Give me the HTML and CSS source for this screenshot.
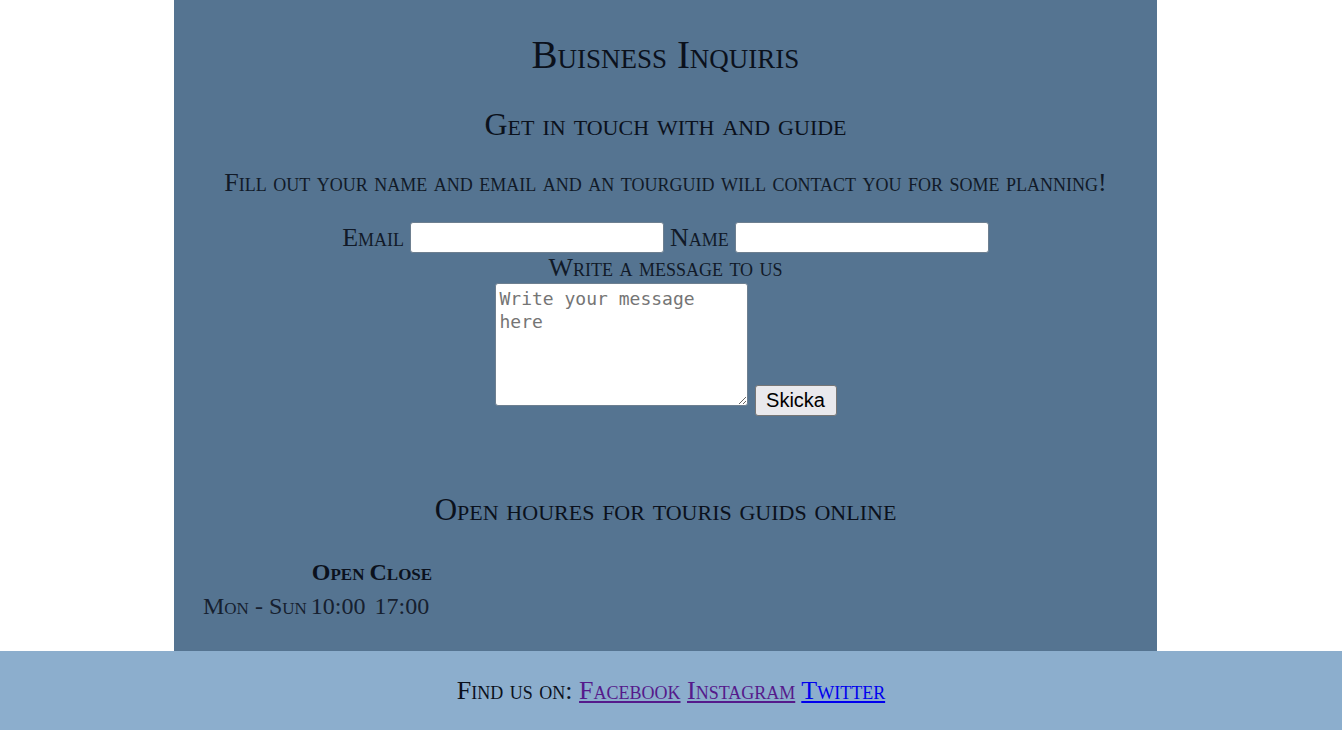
FILE: index.html
```html
<!DOCTYPE html>
<html lang="en">
<head>
<meta charset="utf-8">
<title>Buisness Inquiris</title>
<link rel="stylesheet" href="styles.css">
</head>
<body>
<main class="page">
  <h1 class="title">Buisness Inquiris</h1>
  <h2 class="subtitle">Get in touch with and guide</h2>
  <p class="intro">Fill out your name and email and an tourguid will contact you for some planning!</p>
  <form class="contact">
    <div class="row">
      <label class="lbl" for="email">Email</label>
      <input class="field" id="email" type="email">
      <label class="lbl" for="name">Name</label>
      <input class="field" id="name" type="text">
    </div>
    <label class="lbl msg-lbl" for="msg">Write a message to us</label>
    <div class="row msg-row">
      <textarea class="msg" id="msg" placeholder="Write your message here"></textarea>
      <button class="send" type="button">Skicka</button>
    </div>
  </form>
  <h3 class="hours-title">Open houres for touris guids online</h3>
  <table class="hours">
    <tr><th></th><th>Open</th><th>Close</th></tr>
    <tr><td>Mon - Sun</td><td>10:00</td><td class="close">17:00</td></tr>
  </table>
</main>
<footer class="foot">
  <p class="foot-text">Find us on: <a class="visited" href="#">Facebook</a> <a class="visited" href="#">Instagram</a> <a class="link" href="#">Twitter</a></p>
</footer>
</body>
</html>
```
FILE: styles.css
```css
html, body {
  margin: 0;
  padding: 0;
  background: #ffffff;
}
body {
  font-family: "Liberation Serif", "DejaVu Serif", serif;
  font-variant: small-caps;
  color: #0b111c;
}
.page {
  width: 983px;
  height: 651px;
  margin-left: 174px;
  background: #557491;
  display: flex;
  flex-direction: column;
  align-items: center;
  box-sizing: border-box;
  padding-top: 33px;
}
.title {
  margin: 0;
  font-size: 39px;
  font-weight: normal;
  line-height: 44px;
}
.subtitle {
  margin: 31px 0 0;
  font-size: 32px;
  font-weight: normal;
  line-height: 32px;
}
.intro {
  margin: 29px 0 0;
  font-size: 26px;
  line-height: 28px;
  color: #111a28;
}
.contact {
  display: flex;
  flex-direction: column;
  align-items: center;
  margin-top: 25px;
}
.row {
  display: flex;
  align-items: center;
  gap: 6px;
}
.lbl {
  font-size: 26px;
  line-height: 28px;
  color: #111a28;
}
.field {
  width: 254px;
  height: 31px;
  box-sizing: border-box;
  border: 1px solid #6d7f90;
  border-radius: 3px;
  background: #fff;
  margin: 0;
}
.msg-lbl {
  line-height: 30px;
}
.msg-row {
  align-items: flex-end;
  gap: 7px;
}
.msg {
  width: 253px;
  height: 123px;
  box-sizing: border-box;
  border: 1px solid #6d7f90;
  border-radius: 3px;
  margin: 0;
  padding: 3px 4px;
  font-family: "DejaVu Sans Mono", "Liberation Mono", monospace;
  font-variant: normal;
  font-size: 18px;
  line-height: 23px;
}
.msg::placeholder {
  color: #757575;
}
.send {
  height: 31px;
  width: 82px;
  margin-bottom: -10px;
  font-family: "Liberation Sans", Arial, sans-serif;
  font-variant: normal;
  font-size: 20px;
  color: #000;
  background: #e9e9ed;
  border: 1px solid #767676;
  border-radius: 3px;
  padding: 0 6px;
}
.hours-title {
  margin: 89px 0 0;
  font-size: 31px;
  font-weight: normal;
  line-height: 30px;
}
.hours {
  align-self: flex-start;
  margin: 31px 0 0 26px;
  border-collapse: separate;
  border-spacing: 2px;
  font-size: 24px;
}
.hours th {
  font-weight: bold;
  padding: 1px 1px 4px;
}
.hours td {
  padding: 1px;
  color: #16202f;
}
.hours .close {
  padding-left: 6px;
}
.foot {
  height: 79px;
  background: #8caecd;
  display: flex;
  align-items: center;
  justify-content: center;
}
.foot-text {
  margin: 0;
  font-size: 26px;
}
.visited {
  color: #551a8b;
}
.link {
  color: #0000ee;
}
```
